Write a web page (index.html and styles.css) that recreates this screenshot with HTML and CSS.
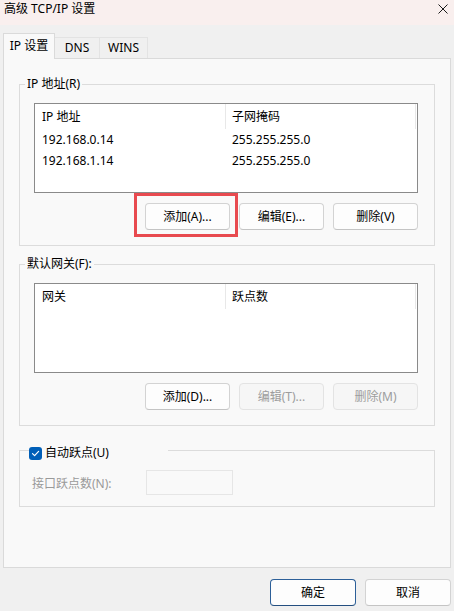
FILE: index.html
```html
<!DOCTYPE html>
<html lang="zh-CN">
<head>
<meta charset="utf-8">
<title>高级 TCP/IP 设置</title>
<link rel="stylesheet" href="styles.css">
</head>
<body>
<div class="window">
  <div class="titlebar">
    <span class="title">高级 TCP/IP 设置</span>
    <svg class="close" width="10" height="10" viewBox="0 0 10 10"><path d="M0.5 0.5L9.5 9.5M9.5 0.5L0.5 9.5" stroke="#1a1a1a" stroke-width="1" fill="none"/></svg>
  </div>
  <div class="tabs">
    <div class="tab active">IP 设置</div>
    <div class="tab t-dns">DNS</div>
    <div class="tab t-wins">WINS</div>
  </div>
  <div class="panel">
    <fieldset class="group g1">
      <legend class="glabel">IP 地址(R)</legend>
      <div class="gbody">
        <div class="listbox">
          <div class="lrow head"><span class="c1">IP 地址</span><span class="c2">子网掩码</span></div>
          <div class="lrow"><span class="c1">192.168.0.14</span><span class="c2">255.255.255.0</span></div>
          <div class="lrow"><span class="c1">192.168.1.14</span><span class="c2">255.255.255.0</span></div>
        </div>
        <div class="btnrow">
          <button class="btn marked">添加(A)...<span class="mark"></span></button>
          <button class="btn">编辑(E)...</button>
          <button class="btn">删除(V)</button>
        </div>
      </div>
    </fieldset>
    <fieldset class="group g2">
      <legend class="glabel">默认网关(F):</legend>
      <div class="gbody">
        <div class="listbox">
          <div class="lrow head"><span class="c1">网关</span><span class="c2">跃点数</span></div>
        </div>
        <div class="btnrow">
          <button class="btn">添加(D)...</button>
          <button class="btn disabled">编辑(T)...</button>
          <button class="btn disabled">删除(M)</button>
        </div>
      </div>
    </fieldset>
    <fieldset class="group g3">
      <legend class="glabel chklabel"><span class="chk"><svg width="9" height="9" viewBox="0 0 9 9"><path d="M1.5 4.6L3.6 6.6L7.6 2.4" stroke="#fff" stroke-width="1.2" fill="none" stroke-linecap="round" stroke-linejoin="round"/></svg></span><span>自动跃点(U)</span></legend>
      <div class="gbody metric">
        <span class="mlabel">接口跃点数(N):</span>
        <span class="minput"></span>
      </div>
    </fieldset>
  </div>
  <div class="footer">
    <button class="btn default">确定</button>
    <button class="btn">取消</button>
  </div>
</div>
</body>
</html>
```
FILE: styles.css
```css
* { box-sizing: border-box; }
html, body { margin: 0; padding: 0; }
body {
  background: #f0f0f0;
  font-family: "Noto Sans", "Noto Sans CJK SC", sans-serif;
  font-size: 12px;
  color: #000;
}
.window {
  width: 454px;
  height: 611px;
  background: #f0f0f0;
}
.titlebar {
  height: 25px;
  background: #f9efee;
  display: flex;
  justify-content: space-between;
  align-items: flex-start;
  padding: 1px 6px 0 4px;
}
.title { line-height: 16px; }
.close { margin-top: 3px; }

.tabs {
  height: 33px;
  padding: 8px 0 0 3px;
  display: flex;
  align-items: flex-end;
}
.tab {
  height: 21px;
  line-height: 20px;
  text-align: center;
  border-top: 1px solid #e3e3e3;
  border-right: 1px solid #e3e3e3;
  background: #f0f0f0;
}
.tab.active {
  position: relative;
  z-index: 1;
  width: 52px;
  height: 26px;
  line-height: 24px;
  margin-bottom: -1px;
  background: #f9f9f9;
  border: 1px solid #dadada;
  border-bottom: none;
}
.t-dns { width: 45px; }
.t-wins { width: 48px; }

.panel {
  margin: 0 3px;
  height: 510px;
  border: 1px solid #dadada;
  background: #f9f9f9;
  overflow: hidden;
}
.group {
  margin: 0 15px;
  padding: 0;
  border: 1px solid #dcdcdc;
  min-width: 0;
}
.g1 { margin-top: 17px; }
.g2 { margin-top: 10px; }
.g3 { margin-top: 13px; }
.glabel {
  margin-left: 5px;
  padding: 0 2px;
  line-height: 16px;
}
.gbody { padding: 11px 16px 15px 14px; }

.listbox {
  height: 90px;
  background: #fff;
  border: 1px solid #8a8a8a;
}
.lrow {
  display: flex;
  height: 21px;
  line-height: 21px;
}
.lrow.head {
  height: 25px;
  line-height: 25px;
}
.c1 { width: 191px; padding-left: 7px; }
.c2 { width: 190px; padding-left: 6px; }
.head .c1, .head .c2 { border-right: 1px solid #e8e8e8; }

.btnrow {
  margin-top: 10px;
  display: flex;
  justify-content: flex-end;
  gap: 9px;
}
.btn {
  width: 85px;
  height: 27px;
  padding: 0;
  font: inherit;
  line-height: 16px;
  color: #000;
  background: #fdfdfd;
  border: 1px solid #d3d3d3;
  border-bottom-color: #c4c4c4;
  border-radius: 4px;
}
.btn.disabled {
  color: #9d9d9d;
  background: #f6f6f6;
  border-color: #e3e3e3;
}
.marked { position: relative; }
.mark {
  position: absolute;
  left: -12px;
  right: -9px;
  top: -11px;
  bottom: -8px;
  border: 3px solid #e84a4f;
  pointer-events: none;
}

.chklabel {
  margin-left: 9px;
  padding: 6px 0 0 0;
  width: 139px;
  display: flex;
  align-items: center;
  gap: 3px;
}
.chk {
  width: 13px;
  height: 13px;
  border-radius: 3px;
  background: #005fb8;
  display: flex;
  align-items: center;
  justify-content: center;
}
.metric {
  display: flex;
  align-items: center;
  padding: 9px 16px 11px 12px;
}
.mlabel {
  width: 114px;
  color: #9a9a9a;
}
.minput {
  width: 87px;
  height: 25px;
  border: 1px solid #e6e6e6;
  background: #f9f9f9;
}

.footer {
  margin-top: 11px;
  padding-right: 3px;
  display: flex;
  justify-content: flex-end;
  gap: 9px;
}
.footer .btn { width: 86px; }
.btn.default {
  border-color: #2c5f98;
  border-bottom-color: #244f80;
}
```
